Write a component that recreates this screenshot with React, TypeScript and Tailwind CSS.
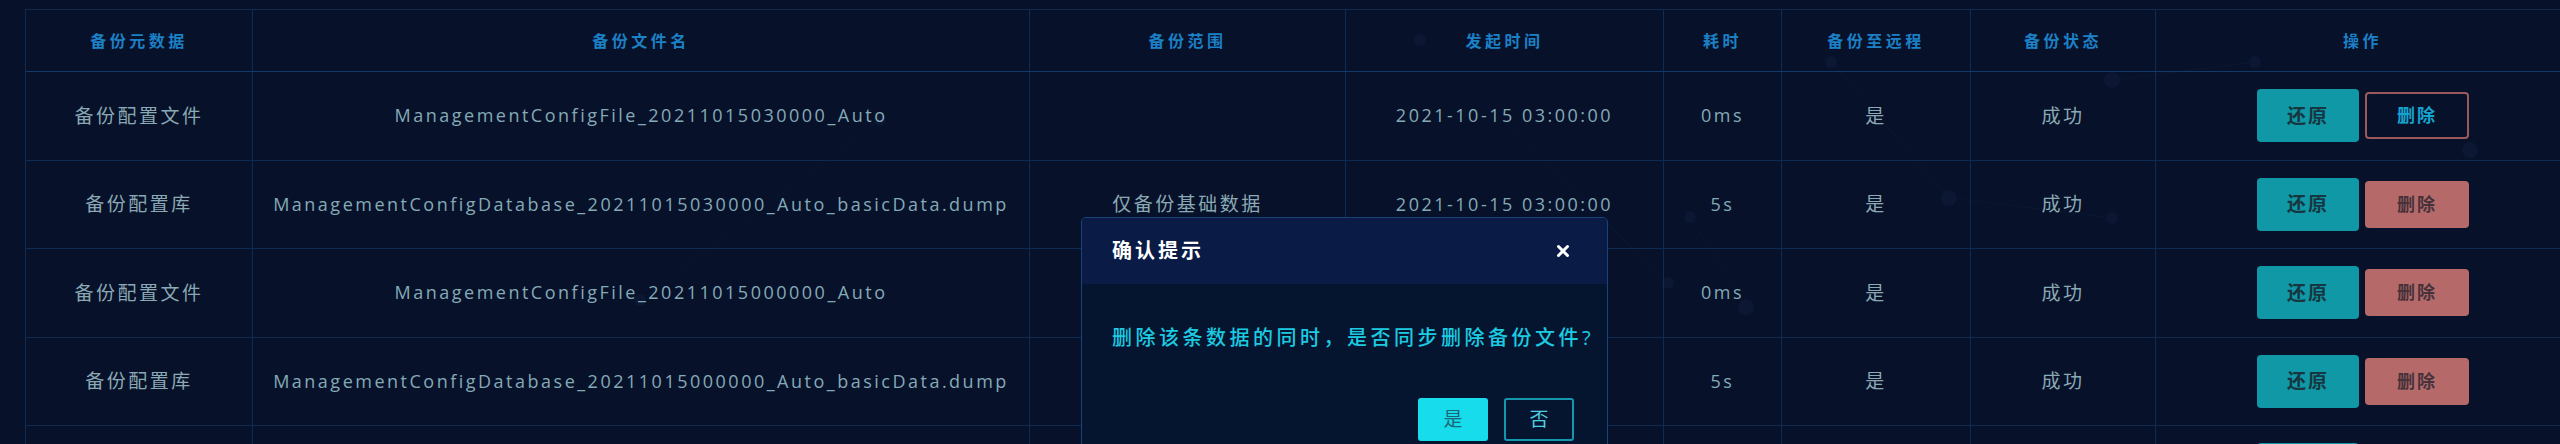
import { X } from "lucide-react";

const cols = [227, 777, 316, 318, 118, 189, 185, 414];

const heads = ["备份元数据", "备份文件名", "备份范围", "发起时间", "耗时", "备份至远程", "备份状态", "操作"];

// rows 3 and 4 have their scope / time hidden under the dialog
const rows = [
    { meta: "备份配置文件", file: "ManagementConfigFile_20211015030000_Auto", scope: "", time: "2021-10-15 03:00:00", cost: "0ms", hover: true },
    { meta: "备份配置库", file: "ManagementConfigDatabase_20211015030000_Auto_basicData.dump", scope: "仅备份基础数据", time: "2021-10-15 03:00:00", cost: "5s" },
    { meta: "备份配置文件", file: "ManagementConfigFile_20211015000000_Auto", scope: "", time: "", cost: "0ms" },
    { meta: "备份配置库", file: "ManagementConfigDatabase_20211015000000_Auto_basicData.dump", scope: "", time: "", cost: "5s" },
];

const font = { fontFamily: '"Open Sans", "Noto Sans CJK SC", sans-serif' };

function Backdrop() {
    // faint particle network behind the table
    const dots = [
        [2112, 80], [2255, 62], [1831, 62], [1949, 198], [1690, 217], [1668, 283],
        [1746, 307], [2112, 218], [1420, 40], [2470, 150], [880, 120], [640, 300],
    ];
    return (
        <svg className="pointer-events-none absolute inset-0" width="2560" height="444">
            <g stroke="#0a1733" strokeWidth="1">
                <line x1="2112" y1="80" x2="2255" y2="62" />
                <line x1="1831" y1="62" x2="1949" y2="198" />
                <line x1="1690" y1="217" x2="1746" y2="307" />
                <line x1="1949" y1="198" x2="2112" y2="218" />
                <line x1="1668" y1="283" x2="1420" y2="40" />
                <line x1="880" y1="120" x2="640" y2="300" />
            </g>
            {dots.map(([x, y], i) => (
                <circle key={i} cx={x} cy={y} r={i % 3 === 0 ? 8 : 6} fill="#0b1733" />
            ))}
        </svg>
    );
}

function Ops({ hover }: { hover?: boolean }) {
    return (
        <div className="flex items-center gap-[6px]">
            <button className="w-[102px] h-[53px] rounded-[4px] bg-[#1098a6] text-[#163641] text-[19px] font-bold tracking-[2px]">
                还原
            </button>
            {hover ? (
                <button className="w-[104px] h-[47px] rounded-[4px] border-2 border-[#9a5a5c] bg-transparent text-[#16a4cf] text-[18px] font-bold tracking-[2px]">
                    删除
                </button>
            ) : (
                <button className="w-[104px] h-[47px] rounded-[4px] bg-[#b56a69] text-[#45323b] text-[18px] font-bold tracking-[2px]">
                    删除
                </button>
            )}
        </div>
    );
}

function ConfirmDialog() {
    return (
        <div className="absolute left-[1081px] top-[217px] w-[527px] h-[260px] rounded-t-[5px] border border-[#17457a] bg-[#06152f] overflow-hidden">
            <div className="h-[66px] bg-[#0a1b46] flex items-center justify-between pl-[30px] pr-[35px]">
                <span className="text-white text-[20px] font-bold tracking-[3px]">确认提示</span>
                <X size={18} strokeWidth={4} className="text-white" />
            </div>
            <div className="pt-[40px]">
                <p className="pl-[30px] h-[28px] leading-[28px] text-[20px] tracking-[3.5px] text-[#1ccbe2] font-medium whitespace-nowrap">
                    删除该条数据的同时，是否同步删除备份文件?
                </p>
                <div className="mt-[46px] flex justify-end gap-[16px] pr-[33px]">
                    <button className="w-[70px] h-[43px] rounded-[3px] bg-[#17dcec] text-[#1b6576] text-[19px]">是</button>
                    <button className="w-[70px] h-[43px] rounded-[3px] border-2 border-[#1496ac] text-[#4fd0e2] text-[19px]">否</button>
                </div>
            </div>
        </div>
    );
}

function Cell({ w, cjk, children }: { w: number; cjk?: boolean; children?: React.ReactNode }) {
    return (
        <div
            className={
                cjk
                    ? "flex items-center justify-center border-r border-[#0f2b52] text-[19px] tracking-[2.5px] text-[#8aa9b4] whitespace-nowrap"
                    : "flex items-center justify-center border-r border-[#0f2b52] text-[18px] tracking-[2.5px] text-[#84aab7] whitespace-nowrap"
            }
            style={{ width: w }}
        >
            {children}
        </div>
    );
}

export default function App() {
    return (
        <div className="relative w-[2560px] h-[444px] overflow-hidden bg-[#071129]" style={font}>
            <Backdrop />
            <div className="relative pt-[9px] pl-[25px]">
                <div className="w-max border-t border-l border-[#0f2b52]">
                    {/* header */}
                    <div className="flex h-[62px] border-b border-[#123a68]">
                        {heads.map((h, i) => (
                            <div
                                key={h}
                                className="flex items-center justify-center border-r border-[#0f2b52] text-[16px] font-bold tracking-[3.5px] text-[#1c80c6]"
                                style={{ width: cols[i] }}
                            >
                                {h}
                            </div>
                        ))}
                    </div>

                    {/* body */}
                    {rows.map((r, idx) => (
                        <div key={idx} className="flex h-[88.5px] border-b border-[#0f2b52]">
                            <Cell w={cols[0]} cjk>{r.meta}</Cell>
                            <Cell w={cols[1]}>{r.file}</Cell>
                            <Cell w={cols[2]} cjk>{r.scope}</Cell>
                            <Cell w={cols[3]}>{r.time}</Cell>
                            <Cell w={cols[4]}>{r.cost}</Cell>
                            <Cell w={cols[5]} cjk>是</Cell>
                            <Cell w={cols[6]} cjk>成功</Cell>
                            <div className="flex items-center justify-center" style={{ width: cols[7] }}>
                                <Ops hover={r.hover} />
                            </div>
                        </div>
                    ))}

                    {/* next row, only its top edge is in view */}
                    <div className="flex h-[40px]">
                        {cols.slice(0, 7).map((w, i) => (
                            <Cell key={i} w={w} />
                        ))}
                        <div className="flex justify-center pt-[17px]" style={{ width: cols[7] }}>
                            <div className="flex gap-[6px]">
                                <div className="w-[102px] h-[53px] rounded-[4px] bg-[#1098a6]" />
                                <div className="w-[104px] h-[47px] mt-[3px] rounded-[4px] bg-[#b56a69]" />
                            </div>
                        </div>
                    </div>
                </div>
            </div>
            <ConfirmDialog />
        </div>
    );
}
